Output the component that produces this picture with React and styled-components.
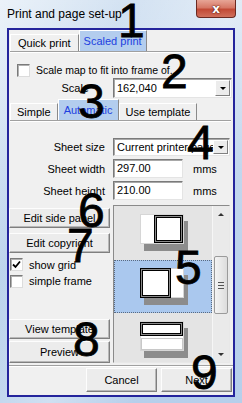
import React from 'react';
import styled, { createGlobalStyle } from 'styled-components';

const GlobalStyle = createGlobalStyle`
  html, body { margin: 0; padding: 0; }
  body {
    font-family: 'Liberation Sans', Arial, sans-serif;
    font-size: 11px;
    color: #000;
  }
`;

const Window = styled.div`
  position: relative;
  width: 242px;
  height: 403px;
  box-sizing: border-box;
  padding: 0 7px 6px 7px;
  display: flex;
  flex-direction: column;
  overflow: hidden;
  background:
    linear-gradient(115deg, rgba(255,255,255,0.55) 0%, rgba(255,255,255,0) 30%, rgba(255,255,255,0.35) 55%, rgba(255,255,255,0) 75%),
    linear-gradient(180deg, #d3e2f2 0%, #c2d7ee 40%, #b6cfeb 100%);
`;

const TitleBar = styled.div`
  height: 28px;
  display: flex;
  justify-content: space-between;
  align-items: flex-start;
`;

const Title = styled.div`
  font-size: 12px;
  padding-top: 7px;
  color: #000;
`;

const CloseButton = styled.div`
  width: 40px;
  height: 18px;
  margin-right: -1px;
  box-sizing: border-box;
  border: 1px solid #6b2a22;
  border-top: none;
  border-radius: 0 0 4px 4px;
  background: linear-gradient(180deg, #e7a596 0%, #d67866 45%, #c24a36 55%, #d0705c 100%);
  display: flex;
  align-items: center;
  justify-content: center;
  color: #fff;
  font-family: 'DejaVu Sans', sans-serif;
  font-weight: bold;
  font-size: 12px;
  text-shadow: 0 0 2px #5a1a10, 0 0 1px #5a1a10;
`;

const Client = styled.div`
  flex: 1;
  border: 2px solid #24249c;
  background: #f0f0f0;
  display: flex;
  flex-direction: column;
`;

const TabRow = styled.div`
  height: 21px;
  margin: 0 2px 0 1px;
  display: flex;
  align-items: flex-end;
  border-bottom: 1px solid #a0a0a0;
  box-shadow: 0 1px 0 #fff;
`;

const Tab = styled.div`
  height: ${p => (p.$active ? 21 : 17)}px;
  box-sizing: border-box;
  padding: 0 ${p => p.$pad || 6}px;
  display: flex;
  align-items: center;
  background: ${p => (p.$active ? '#b3cdee' : '#f0f0f0')};
  color: ${p => (p.$active ? '#1d3fe0' : '#000')};
  border-top: 1px solid #fff;
  border-left: 1px solid #fff;
  border-right: 1px solid #8a8a8a;
  white-space: nowrap;
`;

const CheckRow = styled.label`
  display: flex;
  align-items: center;
  gap: 6px;
  height: 14px;
  margin-top: ${p => p.$mt || 0}px;
  padding-left: ${p => p.$pl || 0}px;
  font-size: ${p => p.$fs || 11}px;
`;

const Box = styled.span`
  width: 13px;
  height: 13px;
  flex-shrink: 0;
  box-sizing: border-box;
  background: #fff;
  border: 1px solid;
  border-color: #7a7a7a #dcdcdc #dcdcdc #7a7a7a;
  box-shadow: inset 1px 1px 0 #b0b0b0;
  display: flex;
  align-items: center;
  justify-content: center;
`;

const ScaleRow = styled.div`
  display: flex;
  align-items: center;
  height: 20px;
  margin-top: 1px;
`;

const ScaleLabel = styled.div`
  width: 80px;
  text-align: right;
  margin-right: 24px;
`;

const Combo = styled.div`
  flex: 1;
  height: ${p => p.$h || 20}px;
  margin-right: 1px;
  box-sizing: border-box;
  background: #fff;
  border: 1px solid;
  border-color: #7a7a7a #e4e4e4 #e4e4e4 #7a7a7a;
  box-shadow: inset 1px 1px 0 #a8a8a8;
  display: flex;
  align-items: center;
  padding-left: 3px;
  font-size: 11px;
`;

const ComboText = styled.span`
  flex: 1;
  white-space: nowrap;
  overflow: hidden;
`;

const DropButton = styled.span`
  width: 15px;
  align-self: stretch;
  margin: 1px 1px 1px 0;
  box-sizing: border-box;
  background: #ececec;
  border: 1px solid;
  border-color: #fff #808080 #808080 #fff;
  display: flex;
  align-items: center;
  justify-content: center;
  &::after {
    content: '';
    border-left: 3px solid transparent;
    border-right: 3px solid transparent;
    border-top: 3px solid #000;
  }
`;

const SubTabRow = styled(TabRow)`
  height: 18px;
  margin-top: 4px;
`;

const Form = styled.div`
  margin-top: 17px;
  display: grid;
  grid-template-columns: 96px 118px;
  column-gap: 8px;
  row-gap: 3px;
  align-items: center;
`;

const FieldLabel = styled.div`
  text-align: right;
  font-size: 11px;
  white-space: nowrap;
`;

const FieldLine = styled.div`
  display: flex;
  align-items: center;
  gap: 10px;
`;

const Input = styled.div`
  width: 70px;
  height: 19px;
  box-sizing: border-box;
  background: #fff;
  border: 1px solid;
  border-color: #7a7a7a #e4e4e4 #e4e4e4 #7a7a7a;
  box-shadow: inset 1px 1px 0 #a8a8a8;
  padding: 2px 3px;
  font-size: 11px;
`;

const Main = styled.div`
  margin-top: 5px;
  height: 158px;
  display: flex;
  gap: 3px;
`;

const LeftColumn = styled.div`
  width: 101px;
  display: flex;
  flex-direction: column;
`;

const Button = styled.div`
  height: ${p => p.$h || 20}px;
  margin-top: ${p => p.$mt || 0}px;
  box-sizing: border-box;
  background: #ececec;
  border: 1px solid;
  border-color: #fdfdfd #7f7f7f #7f7f7f #fdfdfd;
  box-shadow: inset -1px -1px 0 #b8b8b8;
  display: flex;
  align-items: center;
  justify-content: center;
  font-size: 11px;
  white-space: nowrap;
`;

const ListBox = styled.div`
  width: 117px;
  box-sizing: border-box;
  border: 1px solid;
  border-color: #8a8a8a #e8e8e8 #e8e8e8 #8a8a8a;
  display: flex;
  overflow: hidden;
`;

const Items = styled.div`
  flex: 1;
  background: #e4e4e4;
  display: flex;
  flex-direction: column;
`;

const Item = styled.div`
  height: ${p => p.$h}px;
  flex-shrink: 0;
  box-sizing: border-box;
  background: ${p => (p.$selected ? '#aac8ee' : '#e4e4e4')};
  border: 1px dotted ${p => (p.$selected ? '#5a6a80' : 'transparent')};
  display: flex;
  align-items: center;
  justify-content: center;
  padding-left: 2px;
`;

const ScrollBar = styled.div`
  width: 16px;
  background: #eaeaea;
  border-left: 1px solid #f6f6f6;
  display: flex;
  flex-direction: column;
  align-items: center;
`;

const Arrow = styled.div`
  height: 16px;
  width: 100%;
  display: flex;
  align-items: center;
  justify-content: center;
  &::after {
    content: '';
    border-left: 3px solid transparent;
    border-right: 3px solid transparent;
    ${p => (p.$down ? 'border-top: 3px solid #333;' : 'border-bottom: 3px solid #333;')}
  }
`;

const Track = styled.div`
  flex: 1;
  width: 100%;
  display: flex;
  flex-direction: column;
`;

const Thumb = styled.div`
  margin: 34px 1px 0 1px;
  height: 58px;
  box-sizing: border-box;
  border: 1px solid #9a9a9a;
  border-radius: 2px;
  background: linear-gradient(90deg, #f4f4f4, #dcdcdc);
  display: flex;
  flex-direction: column;
  align-items: center;
  justify-content: center;
  gap: 2px;
`;

const Grip = styled.span`
  width: 6px;
  height: 1px;
  background: #555;
`;

const Separator = styled.div`
  margin-top: 2px;
  height: 1px;
  background: #a0a0a0;
  box-shadow: 0 1px 0 #fff;
`;

const ButtonRow = styled.div`
  margin-top: 2px;
  display: flex;
  justify-content: flex-end;
  gap: 4px;
  padding-right: 1px;
`;

const DialogButton = styled(Button)`
  width: 71px;
  height: 24px;
`;

const Callout = styled.div`
  position: absolute;
  left: ${p => p.$x}px;
  top: ${p => p.$y}px;
  font-family: 'Liberation Sans', Arial, sans-serif;
  font-size: 48px;
  line-height: 1;
  color: #000;
  -webkit-text-stroke: 0.8px #000;
  pointer-events: none;
`;

const Check = () => (
  <svg width="9" height="9" viewBox="0 0 9 9">
    <path d="M1 4.5 L3.5 7 L8 1.5" fill="none" stroke="#000" strokeWidth="1.8" />
  </svg>
);

const Frame = ({ x, y, w, h }) => (
  <g fill="none">
    <rect x={x + 0.5} y={y + 0.5} width={w - 1} height={h - 1} stroke="#000" />
    <rect x={x + 1.5} y={y + 1.5} width={w - 3} height={h - 3} stroke="#8a8a8a" />
    <rect x={x + 2.5} y={y + 2.5} width={w - 5} height={h - 5} stroke="#000" />
  </g>
);

const Thumbnail = ({ kind }) => (
  <svg width="49" height="38" viewBox="0 0 49 38">
    <rect x="4" y="7" width="44" height="30" fill="#8c8c8c" />
    <rect x="0.5" y="0.5" width="43" height="29" fill="#fff" stroke="#d6d6d6" />
    {kind === 'right' && <Frame x={14} y={1} w={29} h={28} />}
    {kind === 'left' && <Frame x={0} y={0} w={31} h={30} />}
    {kind === 'top' && (
      <>
        <Frame x={0} y={1} w={43} h={14} />
        <rect x="1.5" y="17.5" width="41" height="11" fill="#fff" stroke="#c8c8c8" />
      </>
    )}
  </svg>
);

const callouts = [
  ['1', 118, -3],
  ['2', 161, 48],
  ['3', 78, 78],
  ['4', 187, 119],
  ['5', 175, 244],
  ['6', 78, 187],
  ['7', 67, 222],
  ['8', 73, 316],
  ['9', 191, 349],
];

export default function App() {
  return (
    <>
      <GlobalStyle />
      <Window>
        <TitleBar>
          <Title>Print and page set-up</Title>
          <CloseButton>x</CloseButton>
        </TitleBar>
        <Client>
          <TabRow>
            <Tab $pad={7}>Quick print</Tab>
            <Tab $active $pad={4}>Scaled print</Tab>
          </TabRow>

          <CheckRow $mt={11} $pl={8} $fs={10.5}>
            <Box />
            Scale map to fit into frame of...
          </CheckRow>

          <ScaleRow>
            <ScaleLabel>Scale</ScaleLabel>
            <Combo>
              <ComboText>162,040</ComboText>
              <DropButton />
            </Combo>
          </ScaleRow>

          <SubTabRow>
            <Tab $pad={6}>Simple</Tab>
            <Tab $active $pad={5}>Automatic</Tab>
            <Tab $pad={6}>Use template</Tab>
          </SubTabRow>

          <Form>
            <FieldLabel>Sheet size</FieldLabel>
            <Combo $h={18}>
              <ComboText>Current printer page</ComboText>
              <DropButton />
            </Combo>
            <FieldLabel>Sheet width</FieldLabel>
            <FieldLine>
              <Input>297.00</Input>
              <span>mms</span>
            </FieldLine>
            <FieldLabel>Sheet height</FieldLabel>
            <FieldLine>
              <Input>210.00</Input>
              <span>mms</span>
            </FieldLine>
          </Form>

          <Main>
            <LeftColumn>
              <Button $mt={3}>Edit side panel</Button>
              <Button $mt={5}>Edit copyright</Button>
              <CheckRow $mt={5} $pl={1}>
                <Box><Check /></Box>
                show grid
              </CheckRow>
              <CheckRow $mt={3} $pl={1}>
                <Box />
                simple frame
              </CheckRow>
              <Button $mt={31}>View template</Button>
              <Button $mt={2} $h={22}>Preview</Button>
            </LeftColumn>
            <ListBox>
              <Items>
                <Item $h={54}><Thumbnail kind="right" /></Item>
                <Item $h={53} $selected><Thumbnail kind="left" /></Item>
                <Item $h={53}><Thumbnail kind="top" /></Item>
              </Items>
              <ScrollBar>
                <Arrow />
                <Track>
                  <Thumb>
                    <Grip />
                    <Grip />
                    <Grip />
                  </Thumb>
                </Track>
                <Arrow $down />
              </ScrollBar>
            </ListBox>
          </Main>

          <Separator />
          <ButtonRow>
            <DialogButton>Cancel</DialogButton>
            <DialogButton>Next</DialogButton>
          </ButtonRow>
        </Client>
        {callouts.map(([n, x, y]) => (
          <Callout key={n} $x={x} $y={y}>{n}</Callout>
        ))}
      </Window>
    </>
  );
}
